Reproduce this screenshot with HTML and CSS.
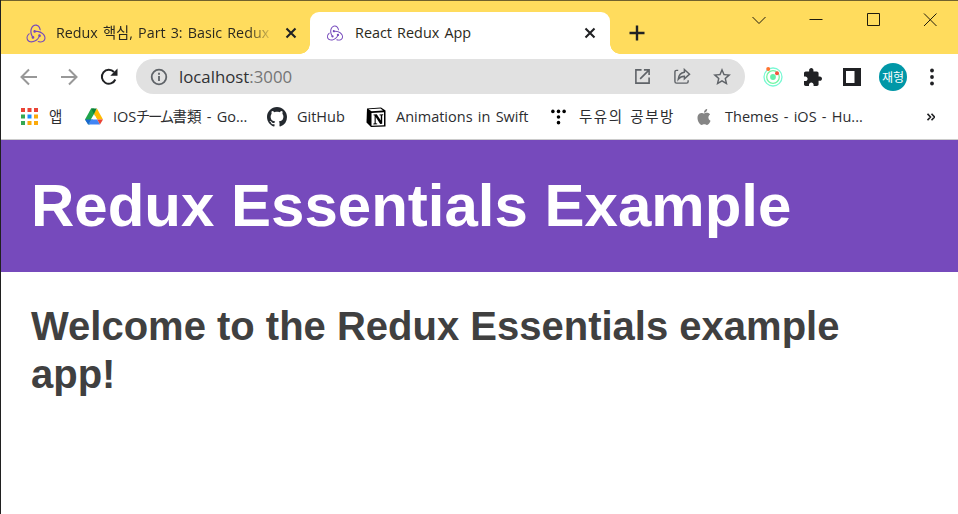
FILE: index.html
```html
<!DOCTYPE html>
<html lang="ko">
<head>
<meta charset="utf-8">
<title>React Redux App</title>
<link rel="stylesheet" href="styles.css">
</head>
<body>
<svg class="defs" width="0" height="0" aria-hidden="true">
  <symbol id="redux" viewBox="0 0 24 24"><path d="M16.634 16.504c.87-.075 1.543-.84 1.5-1.754-.047-.914-.796-1.648-1.709-1.648h-.061a1.71 1.71 0 00-1.648 1.769c.03.479.226.869.494 1.153-1.048 2.038-2.621 3.535-5.005 4.795-1.603.838-3.296 1.154-4.944.929-1.378-.194-2.456-.81-3.116-1.799-.988-1.499-1.078-3.116-.255-4.734.601-1.166 1.499-2.023 2.099-2.443a9.96 9.96 0 01-.42-1.543C-.868 14.408-.416 18.752.932 20.805c1.004 1.498 3.057 2.456 5.304 2.456.599 0 1.228-.044 1.843-.194 3.896-.749 6.847-3.086 8.535-6.532zm5.348-3.746c-2.32-2.728-5.738-4.226-9.634-4.226h-.51c-.253-.554-.837-.899-1.498-.899h-.045c-.943 0-1.678.81-1.647 1.753.03.898.794 1.648 1.708 1.648h.074a1.69 1.69 0 001.499-1.049h.555c2.309 0 4.495.674 6.488 1.992 1.527 1.005 2.622 2.323 3.237 3.896.538 1.288.509 2.547-.045 3.597-.855 1.647-2.294 2.517-4.196 2.517-1.199 0-2.367-.375-2.967-.644-.36.298-.96.793-1.394 1.093 1.318.598 2.652.943 3.94.943 2.922 0 5.094-1.647 5.919-3.236.898-1.798.824-4.824-1.47-7.416zM6.49 17.042c.03.899.793 1.648 1.708 1.648h.06a1.688 1.688 0 001.648-1.768c0-.9-.779-1.647-1.693-1.647h-.06c-.06 0-.149 0-.226.029-1.243-2.098-1.768-4.347-1.572-6.772.12-1.828.72-3.417 1.797-4.735.899-1.124 2.593-1.68 3.746-1.708 3.236-.061 4.585 3.971 4.689 5.574l1.498.45c-.345-4.914-3.4-7.492-6.322-7.492-2.742 0-5.273 1.993-6.293 4.915-1.393 3.896-.479 7.641 1.229 10.638-.149.195-.239.54-.209.868z"/></symbol>
</svg>
<div class="window">
  <header class="tabstrip">
    <div class="tab">
      <svg class="redux-icon large"><use href="#redux"/></svg>
      <span class="tab-title fade">Redux 핵심, Part 3: Basic Redux</span>
      <svg class="close" viewBox="0 0 12 12"><path d="M1.5 1.5l9 9M10.5 1.5l-9 9"/></svg>
    </div>
    <div class="tab active">
      <svg class="redux-icon"><use href="#redux"/></svg>
      <span class="tab-title">React Redux App</span>
      <svg class="close" viewBox="0 0 12 12"><path d="M1.5 1.5l9 9M10.5 1.5l-9 9"/></svg>
    </div>
    <svg class="new-tab" viewBox="0 0 16 16"><path d="M8 .5v15M.5 8h15"/></svg>
    <div class="controls">
      <svg viewBox="0 0 14 14"><path d="M.5 4L7 10.5 13.5 4"/></svg>
      <svg viewBox="0 0 14 14"><path d="M.5 6.5h13"/></svg>
      <svg viewBox="0 0 14 14"><path d="M1.5 .5h12v12h-12z"/></svg>
      <svg viewBox="0 0 14 14"><path d="M1 .5l12.500 12.500M13.500 .5L1 13"/></svg>
    </div>
  </header>

  <div class="toolbar">
    <svg class="nav dim" viewBox="0 0 18 18"><path d="M17 9H2M9 1.5L1.5 9 9 16.500"/></svg>
    <svg class="nav dim" viewBox="0 0 18 18"><path d="M1 9h15M9 1.500L16.500 9 9 16.500"/></svg>
    <svg class="nav reload" viewBox="0 0 18 18"><path d="M15.300 11.500A7 7 0 1 1 14 4"/><path class="solid" d="M17.500.5v7.200h-7.200z"/></svg>
    <div class="omnibox">
      <svg class="info" viewBox="0 0 18 18"><circle cx="9" cy="9" r="7.300"/><path d="M9 8v5M9 4.800v2"/></svg>
      <span class="url">localhost<span class="port">:3000</span></span>
      <svg class="action" viewBox="0 0 18 18"><path d="M8 2H2v14h14v-6M10.500 2H16v5.500M15.500 2.500L6.500 11.500"/></svg>
      <svg class="action share" viewBox="0 0 18 18"><path d="M5 2.500H3.200Q1.500 2.500 1.500 4.200v10.100Q1.500 16 3.200 16h10.600q1.700 0 1.700-1.700V13"/><path d="M11.500 1.500L17 6.500l-5.500 5V8.700C8.500 8.700 6.700 9.700 5 12c.4-4 2.800-7 6.500-7.500z"/></svg>
      <svg class="action star" viewBox="2 2 20 19"><path d="M22 9.240l-7.190-.62L12 2 9.190 8.630 2 9.240l5.460 4.730L5.820 21 12 17.270 18.180 21l-1.630-7.030L22 9.240zM12 15.400l-3.760 2.270 1-4.280-3.320-2.880 4.380-.38L12 6.100l1.710 4.040 4.380.38-3.320 2.880 1 4.280L12 15.400z"/></svg>
    </div>
    <svg class="orbit" viewBox="0 0 20 20"><circle cx="10" cy="10" r="9" stroke="#79f8d4"/><circle cx="10" cy="10" r="6.300" stroke="#72f6a2"/><circle cx="10" cy="10" r="2.900" fill="#65efaa"/><circle cx="5.200" cy="2" r="2" fill="#ff7430"/><circle cx="14" cy="6.300" r="2" fill="#f7533d"/></svg>
    <svg class="puzzle" viewBox="2 1 21 21"><path d="M20.500 11H19V7c0-1.100-.9-2-2-2h-4V3.500C13 2.120 11.880 1 10.500 1S8 2.120 8 3.500V5H4c-1.100 0-1.990.9-1.990 2v3.800H3.500c1.490 0 2.700 1.210 2.700 2.700s-1.210 2.700-2.700 2.700H2V20c0 1.100.9 2 2 2h3.800v-1.500c0-1.490 1.210-2.700 2.700-2.700 1.490 0 2.700 1.210 2.700 2.700V22H17c1.100 0 2-.9 2-2v-4h1.500c1.380 0 2.500-1.120 2.500-2.500S21.880 11 20.500 11z"/></svg>
    <svg class="panel" viewBox="0 0 18 18"><path fill-rule="evenodd" d="M0 0h18v18H0zM3 3v12h8.500V3z"/></svg>
    <span class="avatar">재형</span>
    <svg class="menu" viewBox="0 0 4 18"><circle cx="2" cy="2.500" r="1.900"/><circle cx="2" cy="9" r="1.900"/><circle cx="2" cy="15.500" r="1.900"/></svg>
  </div>

  <nav class="bookmarks">
    <a class="bookmark apps">
      <svg viewBox="0 0 17 17"><path fill="#ea4335" d="M0 0h4v4H0zM6.500 0h4v4h-4zM13 0h4v4h-4z"/><path fill="#34a853" d="M0 6.500h4v4H0zM0 13h4v4H0z"/><path fill="#1a8cff" d="M6.500 6.500h4v4h-4z"/><path fill="#fbaa0b" d="M13 6.500h4v4h-4zM6.500 13h4v4h-4zM13 13h4v4h-4z"/></svg>
      <span>앱</span>
    </a>
    <a class="bookmark drive">
      <svg viewBox="0 0 18 17"><path fill="#1fa44b" d="M6.100.5H9l3 5.200L4 17 0 11.500z"/><path fill="#0b8038" d="M6.100.5h5.800L9 6z"/><path fill="#ffba00" d="M11.900.5L18 11.500h-6L9 6z"/><path fill="#fff" d="M9 6l3.200 5.500H5.800z"/><path fill="#4285f4" d="M5.900 11.500h6.300l2.800 5H3z"/><path fill="#1967d2" d="M0 11.500h5.900L3 16.500z"/><path fill="#ea4335" d="M12.200 11.500H18l-3 5z"/></svg>
      <span>IOS<span class="kana">チーム</span>書類 - Go...</span>
    </a>
    <a class="bookmark github">
      <svg viewBox="0 0 16 16"><path fill="#24292f" d="M8 0C3.580 0 0 3.580 0 8c0 3.540 2.290 6.530 5.470 7.590.4.070.55-.17.55-.38 0-.19-.01-.82-.01-1.490-2.010.37-2.530-.49-2.690-.94-.09-.23-.48-.94-.82-1.130-.28-.15-.68-.52-.01-.53.63-.01 1.080.58 1.230.82.72 1.210 1.870.87 2.330.66.070-.52.28-.87.51-1.070-1.780-.2-3.640-.89-3.640-3.950 0-.87.31-1.590.82-2.150-.08-.2-.36-1.020.08-2.120 0 0 .67-.21 2.200.82.64-.18 1.320-.27 2-.27s1.360.09 2 .27c1.530-1.040 2.200-.82 2.200-.82.44 1.100.16 1.920.08 2.120.51.56.82 1.270.82 2.150 0 3.070-1.870 3.750-3.650 3.950.29.25.54.73.54 1.480 0 1.070-.01 1.930-.01 2.200 0 .21.15.46.55.38A8.010 8.010 0 0 0 16 8c0-4.420-3.580-8-8-8z"/></svg>
      <span>GitHub</span>
    </a>
    <a class="bookmark notion">
      <svg viewBox="0 0 20 20"><path d="M1 1.500L15 .5l4.500 3v16L5 20l-4.500-4.500z"/><path fill="#fff" d="M2.500 2.300l12-.9 2.500 2-11.500.8zM5.500 6l12.500-.8v13l-12.500.6z"/><path d="M7.500 7.500l3.300-.2 4 6.300V8.500l-1.300-.3v-.8l3.700-.2V8l-1 .4v8.300l-2 .2-4.500-7v6.300l1.500.3v.7l-3.800.2v-.8l1.200-.4V8.600l-1.100-.3z"/></svg>
      <span>Animations in Swift</span>
    </a>
    <a class="bookmark tistory">
      <svg viewBox="0 0 16 16"><circle cx="2" cy="2" r="1.900"/><circle cx="8" cy="2" r="1.900"/><circle cx="14" cy="2" r="1.900"/><circle cx="8" cy="8" r="1.900"/><circle cx="8" cy="14" r="1.900"/></svg>
      <span>두유의 공부방</span>
    </a>
    <a class="bookmark apple">
      <svg viewBox="2 0 20 24"><path fill="#858585" d="M12.152 6.896c-.948 0-2.415-1.078-3.960-1.040-2.040.027-3.910 1.183-4.961 3.014-2.117 3.675-.546 9.103 1.519 12.090 1.013 1.454 2.208 3.090 3.792 3.039 1.520-.065 2.090-.987 3.935-.987 1.831 0 2.350.987 3.960.948 1.637-.026 2.676-1.480 3.676-2.948 1.156-1.688 1.636-3.325 1.662-3.415-.039-.013-3.182-1.221-3.220-4.857-.026-3.040 2.480-4.494 2.597-4.559-1.429-2.090-3.623-2.324-4.390-2.376-2-.156-3.675 1.090-4.610 1.090zM15.530 3.830c.843-1.012 1.400-2.427 1.245-3.830-1.207.052-2.662.805-3.532 1.818-.78.896-1.454 2.338-1.273 3.714 1.338.104 2.715-.688 3.559-1.701"/></svg>
      <span>Themes - iOS - Hu...</span>
    </a>
    <svg class="more" viewBox="0 0 8 8"><path d="M.5.800L3.500 4l-3 3.200M4.500.800L7.500 4l-3 3.200"/></svg>
  </nav>

  <main>
    <section class="banner"><h1>Redux Essentials Example</h1></section>
    <section class="content"><h2>Welcome to the Redux Essentials example app!</h2></section>
  </main>
</div>
</body>
</html>
```
FILE: styles.css
```css
* { box-sizing: border-box; }
body { margin: 0; background: #fff; font-family: "Open Sans", "Noto Sans CJK KR", sans-serif; }
svg { display: block; flex: none; }
.defs { position: absolute; }
.window { height: 514px; overflow: hidden; border-left: 1px solid #202020; display: flex; flex-direction: column; }

.tabstrip { height: 54px; flex: none; display: flex; align-items: flex-end; background: #ffdc5d; border-top: 1px solid #71622d; }
.tab { height: 42px; width: 309px; display: flex; align-items: center; padding: 0 13px 0 25px; font-size: 14.4px; word-spacing: 1.4px; color: #2b2920; }
.tab.active { position: relative; width: 300px; padding: 0 14px 0 17px; background: #fff; border-radius: 9px 9px 0 0; }
.tab.active::before, .tab.active::after { content: ""; position: absolute; bottom: 0; width: 10px; height: 10px; }
.tab.active::before { left: -10px; background: radial-gradient(circle at 0 0, transparent 9.5px, #fff 10px); }
.tab.active::after { right: -10px; background: radial-gradient(circle at 100% 0, transparent 9.5px, #fff 10px); }
.redux-icon { width: 16px; height: 16px; margin-right: 12px; fill: #764abc; }
.redux-icon.large { width: 20px; height: 19px; margin-right: 10px; }
.tab-title { flex: 1; overflow: hidden; white-space: nowrap; line-height: 24px; }
.tab-title.fade { flex: 0 0 218px; margin-right: auto; font-size: 14.3px; -webkit-mask-image: linear-gradient(90deg, #000 88%, transparent); mask-image: linear-gradient(90deg, #000 88%, transparent); }
.close { width: 12px; height: 12px; fill: none; stroke: #202124; stroke-width: 2.1; }
.new-tab { width: 16px; height: 16px; margin: 0 0 13px 19px; stroke: #202124; stroke-width: 2.4; }
.controls { margin: 0 21px 27px auto; display: flex; gap: 43px; }
.controls svg { width: 14px; height: 14px; fill: none; stroke: #1e1b0e; stroke-width: 1; }

.toolbar { height: 45px; flex: none; display: flex; align-items: center; padding: 0 24px 0 19px; }
.nav { width: 18px; height: 18px; margin-right: 22px; fill: none; stroke: #202124; stroke-width: 2; }
.nav.dim { stroke: #989898; }
.nav.reload { margin-right: 18px; }
.nav .solid { fill: #202124; stroke: none; }
.omnibox { width: 609px; height: 35px; border-radius: 18px; background: #e1e1e1; display: flex; align-items: center; padding: 0 14px; }
.info { width: 18px; height: 18px; margin-right: 11px; fill: none; stroke: #5f6368; stroke-width: 1.8; }
.url { flex: 1; font-size: 16.8px; line-height: 24px; color: #303134; }
.port { color: #757575; }
.action { width: 17px; height: 17px; margin-left: 22px; fill: none; stroke: #5f6368; stroke-width: 1.7; }
.action.share { width: 18px; stroke-width: 1.5; }
.action.star { width: 18px; fill: #5f6368; stroke: none; }
.orbit { width: 20px; height: 20px; margin-left: 18px; fill: none; stroke-width: 1.3; }
.puzzle { width: 18px; height: 18px; margin-left: 21px; fill: #202124; }
.panel { width: 18px; height: 18px; margin-left: 21px; fill: #202124; }
.avatar { width: 28px; height: 28px; margin-left: 18px; border-radius: 50%; background: #0097a7; color: #fff; font: 12px/28px "Noto Sans CJK KR", sans-serif; text-align: center; white-space: nowrap; }
.menu { width: 4px; height: 18px; margin-left: auto; fill: #202124; }

.bookmarks { height: 41px; flex: none; display: flex; align-items: center; padding: 0 23px 5px 20px; border-bottom: 1px solid #cbcbcb; font-size: 14.5px; word-spacing: 1.5px; color: #2c2d30; }
.bookmark { display: flex; align-items: center; flex: none; white-space: nowrap; line-height: 24px; }
.bookmark > span { padding-top: 1px; }
.bookmark svg { width: 20px; height: 20px; margin-right: 10px; }
.bookmark.apps { width: 64px; }
.bookmark.apps svg { width: 17px; height: 17px; margin-right: 11px; }
.drive { width: 182px; }
.drive .kana { font-feature-settings: "palt"; letter-spacing: -1.5px; }
.bookmark.drive svg { width: 18px; height: 17px; }
.github { width: 99px; }
.notion { width: 185px; }
.tistory { width: 146px; }
.tistory span { letter-spacing: 1.5px; }
.bookmark.tistory svg { width: 15px; height: 16px; margin-right: 13px; }
.apple { width: 180px; }
.bookmark.apple svg { width: 14px; height: 16px; margin-right: 14px; }
.more { width: 8px; height: 8px; margin-left: auto; fill: none; stroke: #202124; stroke-width: 1.6; }

main { flex: 1; font-family: "Liberation Sans", Arial, sans-serif; }
.banner { height: 132px; padding: 30px; background: #764abc; color: #fff; }
h1, h2 { margin: 0; font-weight: 700; }
h1 { font-size: 60px; line-height: 72px; }
.content { padding: 30px; color: #404040; }
h2 { font-size: 40px; line-height: 48px; }
```
